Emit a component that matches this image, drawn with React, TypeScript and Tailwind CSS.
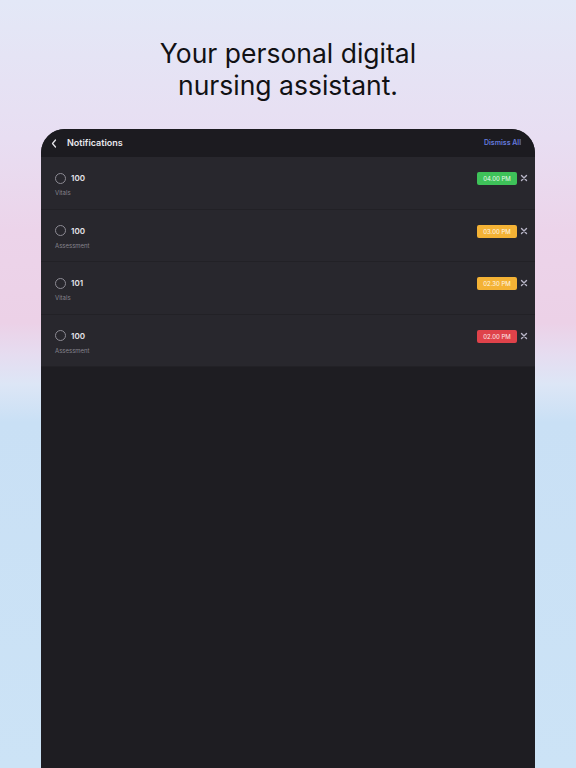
import React from 'react';

type Item = { room: string; kind: string; time: string; tone: 'green' | 'amber' | 'red' };

const ITEMS: Item[] = [
  { room: '100', kind: 'Vitals', time: '04.00 PM', tone: 'green' },
  { room: '100', kind: 'Assessment', time: '03.00 PM', tone: 'amber' },
  { room: '101', kind: 'Vitals', time: '02.30 PM', tone: 'amber' },
  { room: '100', kind: 'Assessment', time: '02.00 PM', tone: 'red' },
];

const TONES = {
  green: 'bg-[#3ec259]',
  amber: 'bg-[#f4b235]',
  red: 'bg-[#df424a]',
};

function Row({ item }: { item: Item }) {
  return (
    <div className="flex h-[52.5px] items-start justify-between border-b border-[#222126] bg-[#28272d] pl-[14px] pr-[7px] pt-[15px]">
      <div className="flex flex-col">
        <div className="flex items-center gap-[5px]">
          <span className="h-[11px] w-[11px] rounded-full border border-[#8d8b94]" />
          <span className="text-[8px] font-semibold leading-[12px] text-[#e6e5ea]">{item.room}</span>
        </div>
        <span className="mt-[4px] text-[6px] leading-[10px] text-[#85838c]">{item.kind}</span>
      </div>
      <div className="flex items-center gap-[3px]">
        <span className={`${TONES[item.tone]} flex h-[13px] w-[40px] items-center justify-center rounded-[2px] text-[6px] text-white/90`}>
          {item.time}
        </span>
        <svg width="8" height="8" viewBox="0 0 8 8" className="mb-[1px]">
          <path d="M1.5 1.5 L6.5 6.5 M6.5 1.5 L1.5 6.5" stroke="#b9b6c8" strokeWidth="1.4" strokeLinecap="round" />
        </svg>
      </div>
    </div>
  );
}

export default function App() {
  return (
    <div
      className="flex h-[768px] w-full flex-col items-center overflow-hidden bg-[linear-gradient(180deg,#e3e8f7_0%,#e8def2_18%,#ecd4ea_30%,#ecd1e7_42%,#e6dcf0_46%,#dde6f6_50%,#c9e0f5_55%,#cce3f6_100%)]"
      style={{ fontFamily: 'Inter, "Noto Sans", sans-serif' }}
    >
      <h1 className="pt-[37px] text-center text-[26.5px] leading-[32px] font-normal text-[#111114]">
        Your personal digital
        <br />
        nursing assistant.
      </h1>

      <div className="mt-[28px] flex w-[494px] flex-1 flex-col overflow-hidden rounded-t-[24px] bg-[#1e1d22]">
        <div className="flex h-[28px] shrink-0 items-center justify-between bg-[#1c1b20] pl-[10px] pr-[14px]">
          <div className="flex items-center gap-[10px]">
            <svg width="6" height="9" viewBox="0 0 6 9">
              <path d="M4.5 1 L1.5 4.5 L4.5 8" stroke="#e4e3e8" strokeWidth="1.3" fill="none" strokeLinecap="round" strokeLinejoin="round" />
            </svg>
            <span className="text-[9px] font-semibold text-[#e8e7ec]">Notifications</span>
          </div>
          <span className="text-[7px] font-semibold text-[#6479dc]">Dismiss All</span>
        </div>
        {ITEMS.map((it, i) => (
          <Row key={i} item={it} />
        ))}
      </div>
    </div>
  );
}
